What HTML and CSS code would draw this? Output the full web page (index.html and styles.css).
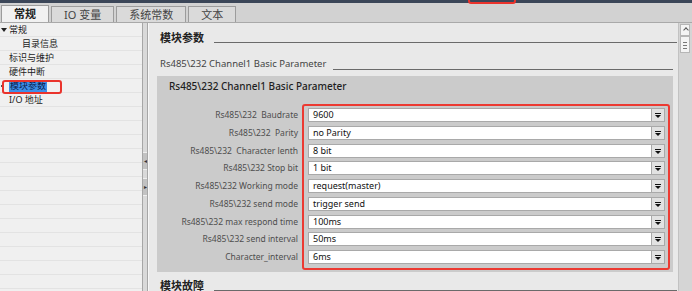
FILE: index.html
```html
<!DOCTYPE html>
<html lang="zh">
<head>
  <meta charset="UTF-8" />
  <title>模块参数</title>
  <link rel="stylesheet" href="styles.css">
</head>
<body>
  <!-- window strip -->
  <div class="topbar"><span class="mark"></span></div>

  <!-- property tabs -->
  <div class="tabs">
    <div class="tab active">常规</div>
    <div class="tab">IO 变量</div>
    <div class="tab">系统常数</div>
    <div class="tab">文本</div>
  </div>

  <div class="main">
    <ul class="tree">
      <li class="open">常规</li>
      <li class="sub">目录信息</li>
      <li>标识与维护</li>
      <li>硬件中断</li>
      <li class="current"><span>模块参数</span></li>
      <li>I/O 地址</li>
    </ul>

    <div class="splitter">
      <span class="knob">◂</span>
      <span class="knob">▸</span>
    </div>

    <div class="content">
      <h2 class="section">模块参数</h2>
      <h3 class="subsection">Rs485\232 Channel1 Basic Parameter</h3>

      <div class="group">
        <div class="group-title">Rs485\232 Channel1 Basic Parameter</div>
        <div class="params">
          <div class="labels">
            <div class="label">Rs485\232  Baudrate</div>
            <div class="label">Rs485\232  Parity</div>
            <div class="label">Rs485\232  Character lenth</div>
            <div class="label">Rs485\232 Stop bit</div>
            <div class="label">Rs485\232 Working mode</div>
            <div class="label">Rs485\232 send mode</div>
            <div class="label">Rs485\232 max respond time</div>
            <div class="label">Rs485\232 send interval</div>
            <div class="label">Character_interval</div>
          </div>
          <div class="fields">
            <div class="field"><span class="value">9600</span><span class="drop"></span></div>
            <div class="field"><span class="value">no Parity</span><span class="drop"></span></div>
            <div class="field"><span class="value">8 bit</span><span class="drop"></span></div>
            <div class="field"><span class="value">1 bit</span><span class="drop"></span></div>
            <div class="field"><span class="value">request(master)</span><span class="drop"></span></div>
            <div class="field"><span class="value">trigger send</span><span class="drop"></span></div>
            <div class="field"><span class="value">100ms</span><span class="drop"></span></div>
            <div class="field"><span class="value">50ms</span><span class="drop"></span></div>
            <div class="field"><span class="value">6ms</span><span class="drop"></span></div>
          </div>
        </div>
      </div>

      <h2 class="section">模块故障</h2>
    </div>

    <div class="scrollbar">
      <span class="up"></span>
      <span class="thumb"></span>
    </div>
  </div>
</body>
</html>
```

FILE: styles.css
```css
body {
  margin: 0;
  width: 692px;
  height: 291px;
  overflow: hidden;
  display: flex;
  flex-direction: column;
  background: #d2d2d2;
  font-family: "Noto Sans", "Noto Sans CJK SC", sans-serif;
  color: #333;
}
.topbar {
  flex: none;
  height: 3px;
  background: #3b4658;
  position: relative;
}
.topbar .mark {
  position: absolute;
  left: 468px;
  top: -20px;
  width: 44px;
  height: 20px;
  border: 2px solid #ea332c;
  border-radius: 3px;
}
.tabs {
  flex: none;
  height: 19px;
  display: flex;
  align-items: flex-end;
  gap: 2px;
  padding-left: 1px;
}
.tab {
  height: 16px;
  padding: 0 12px;
  border: 1px solid #9c9c9c;
  border-bottom: none;
  background: #dadada;
  font-size: 11px;
  line-height: 15px;
  color: #444;
  box-sizing: border-box;
}
.tab.active {
  height: 17px;
  background: #f1f1f1;
  font-weight: bold;
  color: #222;
}
.main {
  flex: 1;
  display: flex;
  min-height: 0;
  border-top: 1px solid #a9a9a9;
}
.tree {
  width: 142px;
  margin: 0;
  padding: 0;
  list-style: none;
  background: repeating-linear-gradient(#f0f0f0 0 13px, #e3e3e3 13px 14px);
  font-size: 9px;
  line-height: 14px;
  color: #222;
}
.tree li {
  position: relative;
  height: 14px;
  padding-left: 9px;
}
.tree li.sub {
  padding-left: 22px;
}
.tree li.open::before {
  content: "";
  position: absolute;
  left: 1px;
  top: 5px;
  border-left: 3px solid transparent;
  border-right: 3px solid transparent;
  border-top: 4px solid #222;
}
.tree li.current::before {
  content: "";
  position: absolute;
  left: 1px;
  top: 6px;
  width: 2px;
  height: 2px;
  background: #555;
}
.tree li.current span {
  display: inline-block;
  line-height: 12px;
  padding: 0 1px;
  background: #3c8fe8;
  color: #0c1b4e;
}
.tree li.current::after {
  content: "";
  position: absolute;
  left: 2px;
  top: 1px;
  width: 60px;
  height: 14px;
  box-sizing: border-box;
  border: 2px solid #ea332c;
  border-radius: 3px;
}
.splitter {
  width: 6px;
  box-sizing: border-box;
  background: #d9d9d9;
  border-left: 1px solid #a6a6a6;
  border-right: 1px solid #a6a6a6;
  display: flex;
  flex-direction: column;
  gap: 8px;
  padding-top: 129px;
}
.knob {
  height: 16px;
  background: #c2c2c2;
  border-top: 1px solid #eee;
  border-bottom: 1px solid #eee;
  font-size: 6px;
  line-height: 16px;
  color: #333;
  text-align: center;
  overflow: hidden;
}
.content {
  flex: 1;
  min-width: 0;
  overflow: hidden;
  background: #e9e9e9;
  border-left: 1px solid #f7f7f7;
  padding: 8px 1px 0 8px;
}
.section {
  display: flex;
  align-items: center;
  height: 14px;
  margin: 0 0 0 3px;
  font-size: 11px;
  line-height: 14px;
  font-weight: bold;
  color: #222;
}
.section::after {
  content: "";
  flex: 1;
  height: 1px;
  margin: 8px 0 0 10px;
  background: #6a6a6a;
}
.subsection {
  display: flex;
  align-items: center;
  height: 14px;
  margin: 12px 4px 0 3px;
  font-size: 9.5px;
  line-height: 14px;
  font-weight: normal;
  color: #444;
  white-space: nowrap;
}
.subsection::after {
  content: "";
  flex: 1;
  height: 1px;
  margin: 10px 0 0 7px;
  background: #6a6a6a;
}
.group {
  margin: 5px 4px 7px 0;
  padding: 3px 0 2px;
  background: #cbcbcb;
}
.group-title {
  padding-left: 12px;
  font-size: 10px;
  line-height: 14px;
  font-weight: 500;
  color: #1e1e1e;
}
.params {
  display: flex;
  margin-top: 11px;
}
.labels {
  width: 145px;
  box-sizing: border-box;
  padding: 4px 4px 0 0;
  display: flex;
  flex-direction: column;
  gap: 3.75px;
  text-align: right;
  font-size: 8.5px;
  color: #4e4e4e;
  white-space: pre;
}
.label {
  height: 14px;
  line-height: 14px;
}
.fields {
  flex: 1;
  margin-right: 3px;
  border: 2px solid #ec3a32;
  border-radius: 3px;
  padding: 2px 3px 4px 4px;
  display: flex;
  flex-direction: column;
  gap: 3.75px;
}
.field {
  display: flex;
  height: 14px;
}
.value {
  flex: 1;
  background: #fff;
  border: 1px solid #a9a9a9;
  padding-left: 4px;
  font-size: 9px;
  line-height: 12px;
  color: #111;
}
.drop {
  position: relative;
  width: 13px;
  box-sizing: border-box;
  background: #e2e2e2;
  border: 1px solid #a9a9a9;
  border-left: none;
}
.drop::before {
  content: "";
  position: absolute;
  left: 3px;
  top: 4px;
  width: 6px;
  height: 1px;
  background: #111;
}
.drop::after {
  content: "";
  position: absolute;
  left: 3px;
  top: 6px;
  border-left: 3px solid transparent;
  border-right: 3px solid transparent;
  border-top: 3px solid #111;
}
.scrollbar {
  width: 14px;
  box-sizing: border-box;
  background: #d5d5d5;
  border-left: 1px solid #c2c2c2;
  padding: 1px 2px 0 1px;
  display: flex;
  flex-direction: column;
}
.up, .thumb {
  position: relative;
  background: #f4f4f4;
  border: 1px solid #b6b6b6;
  box-sizing: border-box;
}
.up {
  height: 12px;
}
.up::after {
  content: "";
  position: absolute;
  left: 2px;
  top: 3px;
  width: 3px;
  height: 3px;
  border-left: 1px solid #555;
  border-top: 1px solid #555;
  transform: translateX(1px) rotate(45deg);
}
.thumb {
  height: 17px;
}
.thumb::after {
  content: "";
  position: absolute;
  left: 2px;
  right: 2px;
  top: 5px;
  height: 5px;
  border-top: 1px solid #777;
  border-bottom: 1px solid #777;
  background: linear-gradient(transparent 2px, #777 2px 3px, transparent 3px);
}
```
